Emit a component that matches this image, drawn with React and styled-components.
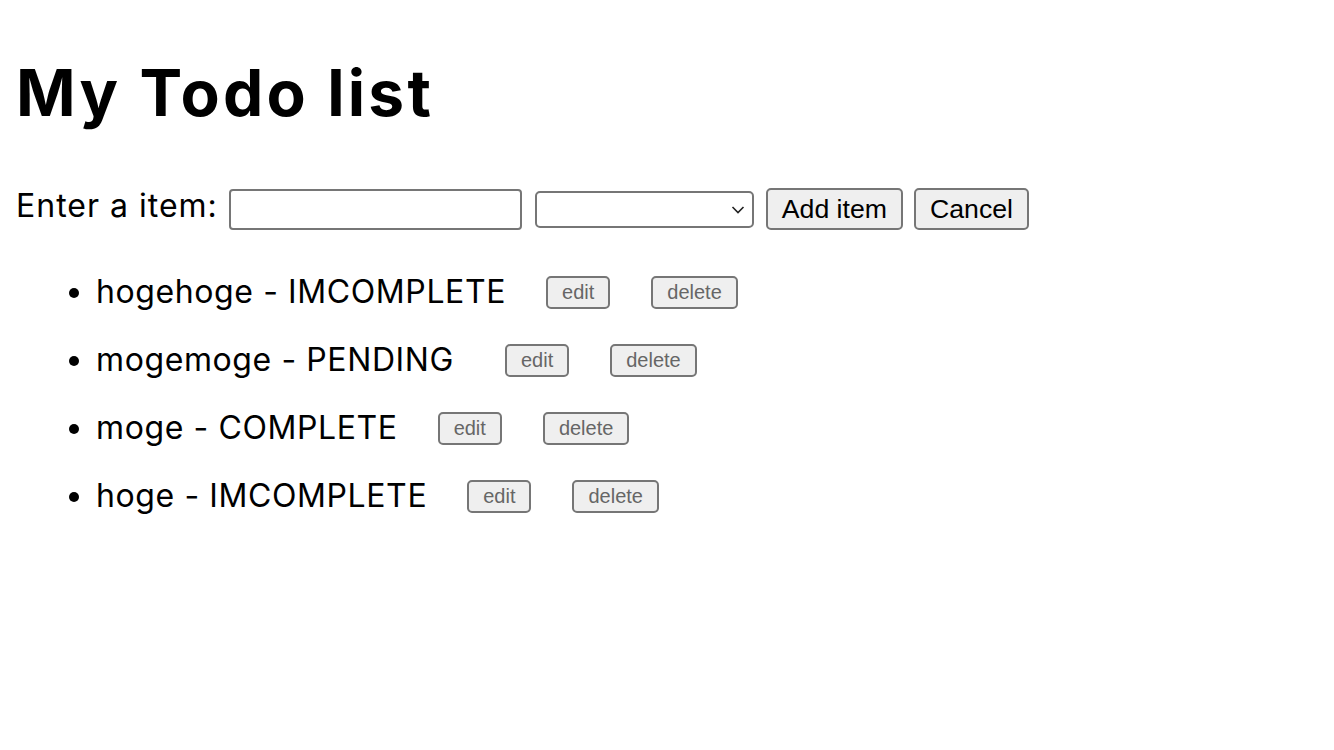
import React from 'react';
import styled, { createGlobalStyle } from 'styled-components';

const GlobalStyle = createGlobalStyle`
  body {
    margin: 0;
    background: #fff;
    color: #000;
    font-family: Inter, "Liberation Sans", "Noto Sans CJK JP", sans-serif;
  }
`;

const StyledPage = styled.div`
  padding: 0 16px;
`;

const StyledTitle = styled.h1`
  margin: 54px 0 57px;
  font-size: 64px;
  line-height: 77px;
  font-weight: 700;
  letter-spacing: 3.2px;
`;

const StyledForm = styled.form`
  display: flex;
  flex-direction: row;
  align-items: center;
  height: 42px;
`;

const StyledLabel = styled.span`
  font-size: 32px;
  line-height: 42px;
  letter-spacing: 1px;
  padding-bottom: 7px;
  margin-right: 11px;
`;

const StyledInput = styled.input`
  box-sizing: border-box;
  width: 293px;
  height: 41px;
  border: 2px solid #767676;
  border-radius: 4px;
  background: #fff;
  margin: 0 13px 0 0;
  padding: 0 6px;
  font-size: 26px;
`;

const StyledSelectWrap = styled.div`
  position: relative;
  margin-right: 12px;
`;

const StyledSelect = styled.select`
  appearance: none;
  box-sizing: border-box;
  width: 219px;
  height: 37px;
  border: 2px solid #767676;
  border-radius: 5px;
  background: #fff;
  margin: 0;
  display: block;
`;

const StyledChevron = styled.svg`
  position: absolute;
  right: 9px;
  top: 14px;
  pointer-events: none;
`;

const StyledButton = styled.button`
  box-sizing: border-box;
  height: ${p => (p.small ? '33px' : '42px')};
  padding: 0 14px;
  margin-left: ${p => p.gap || 0}px;
  border: 2px solid #767676;
  border-radius: 5px;
  background: #efefef;
  color: ${p => (p.small ? '#666' : '#000')};
  font-family: "Liberation Sans", Arial, sans-serif;
  font-size: ${p => (p.small ? '20px' : '26.67px')};
  line-height: 1;
`;

const StyledList = styled.ul`
  margin: 38px 0 0;
  padding-left: 80px;
`;

const StyledItem = styled.li`
  font-size: 32px;
  line-height: 48px;
  margin-bottom: 20px;
`;

const StyledRow = styled.div`
  display: flex;
  flex-direction: row;
  align-items: center;
  height: 48px;
`;

const StyledText = styled.span`
  letter-spacing: 0.6px;
`;

const todos = [
  { name: 'hogehoge', status: 'IMCOMPLETE', gap: 40 },
  { name: 'mogemoge', status: 'PENDING', gap: 51 },
  { name: 'moge', status: 'COMPLETE', gap: 40 },
  { name: 'hoge', status: 'IMCOMPLETE', gap: 40 }
];

export default function App() {
  return (
    <StyledPage>
      <GlobalStyle />
      <StyledTitle>My Todo list</StyledTitle>
      <StyledForm onSubmit={e => e.preventDefault()}>
        <StyledLabel>Enter a item:</StyledLabel>
        <StyledInput type="text" />
        <StyledSelectWrap>
          <StyledSelect defaultValue="">
            <option value="" />
            <option value="IMCOMPLETE">IMCOMPLETE</option>
            <option value="PENDING">PENDING</option>
            <option value="COMPLETE">COMPLETE</option>
          </StyledSelect>
          <StyledChevron width="14" height="9" viewBox="0 0 14 9">
            <path d="M1.5 2 L7 7.5 L12.5 2" fill="none" stroke="#222" strokeWidth="1.6" />
          </StyledChevron>
        </StyledSelectWrap>
        <StyledButton type="submit">Add item</StyledButton>
        <StyledButton type="button" gap={11}>Cancel</StyledButton>
      </StyledForm>
      <StyledList>
        {todos.map(todo => (
          <StyledItem key={todo.name}>
            <StyledRow>
              <StyledText>{`${todo.name} - ${todo.status}`}</StyledText>
              <StyledButton small gap={todo.gap}>edit</StyledButton>
              <StyledButton small gap={41}>delete</StyledButton>
            </StyledRow>
          </StyledItem>
        ))}
      </StyledList>
    </StyledPage>
  );
}
